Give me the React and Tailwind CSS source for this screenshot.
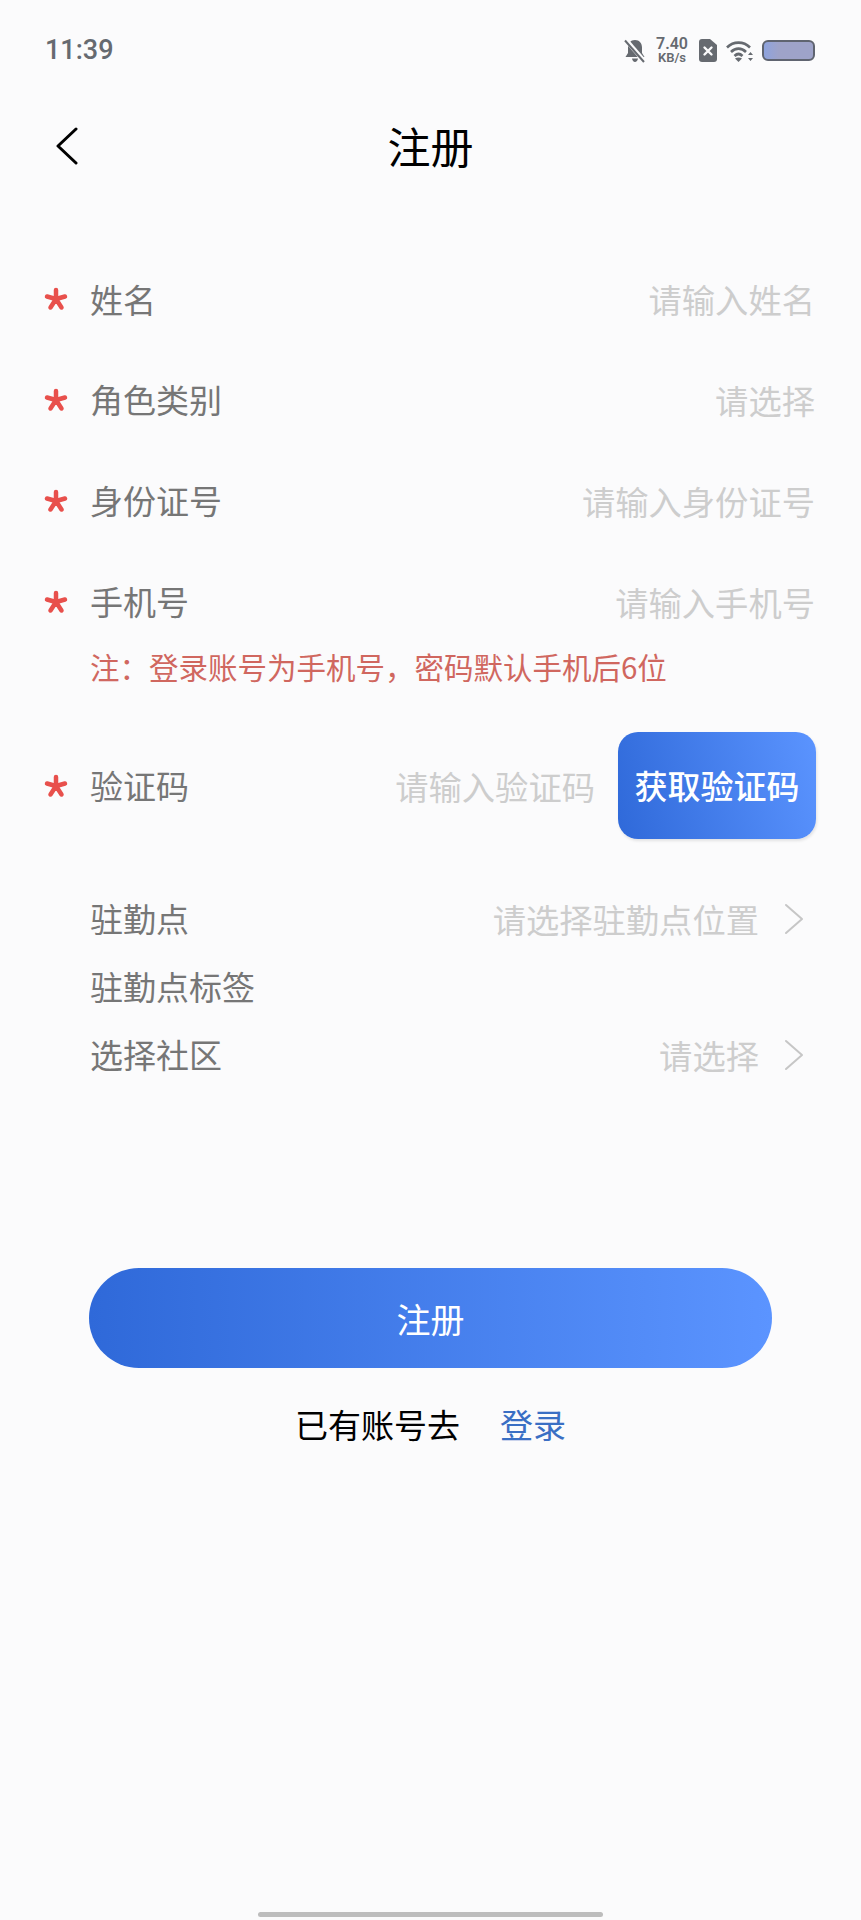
import React from 'react';

const font = { fontFamily: '"Noto Sans CJK SC", "Noto Sans", sans-serif' };

const Star = () => (
    <span className="w-[46px] flex justify-start items-center">
        <svg width="24" height="24" viewBox="0 0 24 24" fill="none" stroke="#e8504c" strokeWidth="4.500" strokeLinecap="round">
            <path d="M12 3v9M3 9.500l9 2.500M21 9.500l-9 2.500M6.500 20.500l5.500-8.500M17.500 20.500l-5.500-8.500" />
        </svg>
    </span>
);

const Chevron = () => (
    <svg width="20" height="32" viewBox="0 0 20 32" fill="none" stroke="#c6c6c6" strokeWidth="2" strokeLinecap="round" strokeLinejoin="round">
        <path d="M2 2l16 14L2 30" />
    </svg>
);

const Row = ({ label, placeholder }) => (
    <div className="h-[100.750px] flex items-center pl-[44px] pr-[46px]">
        <Star />
        <span className="text-[33px] text-[#767676]">{label}</span>
        <span className="ml-auto text-[33.300px] text-[#cdcdcd]">{placeholder}</span>
    </div>
);

const LinkRow = ({ label, placeholder }) => (
    <div className="h-[68px] flex items-center pl-[90px] pr-[57px]">
        <span className="text-[33px] text-[#767676]">{label}</span>
        {placeholder && (
            <>
                <span className="ml-auto text-[33.300px] text-[#cdcdcd]">{placeholder}</span>
                <span className="ml-[25px] flex items-center"><Chevron /></span>
            </>
        )}
    </div>
);

const StatusBar = () => (
    <div className="h-[101px] flex items-center pl-[45px] pr-[46px] text-[#666a70]">
        <span className="text-[27px] font-medium" style={{ fontFamily: 'Roboto, sans-serif' }}>11:39</span>
        <div className="ml-auto flex items-center">
            {/* muted bell */}
            <svg width="22" height="24" viewBox="0 0 22 24">
                <path d="M11 1c-4.500 0-7 3.200-7 7.500V14l-2.500 4h19L18 14V8.500C18 4.200 15.500 1 11 1zM8 19.500c.4 2 1.500 3.500 3 3.500s2.600-1.500 3-3.500z" fill="#666a70" />
                <path d="M2 1l19 22" stroke="#fbfbfc" strokeWidth="4.500" />
                <path d="M1 1.500l19 21.500" stroke="#666a70" strokeWidth="2" />
            </svg>
            <div className="ml-[8px] w-[36px] flex flex-col items-center leading-none font-semibold" style={{ fontFamily: 'Roboto, sans-serif' }}>
                <span className="text-[16px] leading-[15px]">7.40</span>
                <span className="text-[13px] leading-[14px]">KB/s</span>
            </div>
            {/* no sim */}
            <svg className="ml-[9px]" width="18" height="23" viewBox="0 0 18 23">
                <path d="M3 0h8l7 6v14a3 3 0 0 1-3 3H3a3 3 0 0 1-3-3V3a3 3 0 0 1 3-3z" fill="#666a70" />
                <path d="M5.500 8.500l7 7M12.500 8.500l-7 7" stroke="#fbfbfc" strokeWidth="2.400" strokeLinecap="round" />
            </svg>
            {/* wifi */}
            <svg className="ml-[9px]" width="28" height="22" viewBox="0 0 28 22" fill="none" stroke="#666a70" strokeWidth="2.600">
                <path d="M1 7.500C7.500 1 17.500 1 24 7.500" />
                <path d="M5 12c4.500-4.500 10.500-4.500 15 0" />
                <path d="M8.500 16c2.500-2.500 5.500-2.500 8 0" />
                <path d="M12.500 22l-3.500-3.500c2-1.500 5-1.500 7 0z" fill="#666a70" stroke="none" />
                <path d="M24.500 12l2.500 3h-5zM24.500 21l2.500-3h-5z" fill="#666a70" stroke="none" />
            </svg>
            <div className="ml-[8px] w-[53px] h-[21px] rounded-[6px] border-2 border-[#5f6470] bg-gradient-to-r from-[#8ea3de] via-[#9ea3c9] via-30% to-[#9ea3c9]" />
        </div>
    </div>
);

export default function App() {
    return (
        <div className="w-[861px] h-[1920px] bg-[#fbfbfc] flex flex-col overflow-hidden" style={font}>
            <StatusBar />

            {/* nav */}
            <div className="relative h-[88px] flex items-center justify-center">
                <svg className="absolute left-[55px] top-[26px]" width="24" height="38" viewBox="0 0 24 38" fill="none" stroke="#000" strokeWidth="3" strokeLinecap="round" strokeLinejoin="round">
                    <path d="M21 2L3 19l18 17" />
                </svg>
                <span className="text-[43px] text-black">注册</span>
            </div>

            {/* required fields */}
            <div className="mt-[60px]">
                <Row label="姓名" placeholder="请输入姓名" />
                <Row label="角色类别" placeholder="请选择" />
                <Row label="身份证号" placeholder="请输入身份证号" />
                <Row label="手机号" placeholder="请输入手机号" />
            </div>
            <p className="pl-[90px] h-[30px] leading-[28px] text-[29.500px] text-[#d0675f]">注：登录账号为手机号，密码默认手机后6位</p>

            {/* code row */}
            <div className="mt-[50px] h-[107px] flex items-center pl-[44px] pr-[45px]">
                <Star />
                <span className="text-[33px] text-[#767676]">验证码</span>
                <span className="ml-auto text-[33.300px] text-[#cdcdcd]">请输入验证码</span>
                <button className="ml-[23px] w-[198px] h-[107px] rounded-[20px] bg-[linear-gradient(75deg,#2f69d9,#5b94ff)] text-white text-[33px] font-medium shadow-[1px_2px_3px_rgba(0,0,0,0.1)]">获取验证码</button>
            </div>

            {/* optional */}
            <div className="mt-[46px]">
                <LinkRow label="驻勤点" placeholder="请选择驻勤点位置" />
                <LinkRow label="驻勤点标签" />
                <LinkRow label="选择社区" placeholder="请选择" />
            </div>

            <button className="mt-[179px] mx-[89px] h-[100px] rounded-[50px] bg-gradient-to-r from-[#2f69d9] to-[#5b94ff] text-white text-[34px]">注册</button>

            <div className="mt-[34px] h-[44px] flex items-center justify-center text-[33px] leading-none">
                <span className="text-black">已有账号去</span>
                <span className="ml-[40px] text-[#3a6fc4]">登录</span>
            </div>

            <div className="mt-auto mb-[3px] mx-auto w-[345px] h-[5px] rounded-full bg-[#bdbdbd]" />
        </div>
    );
}
